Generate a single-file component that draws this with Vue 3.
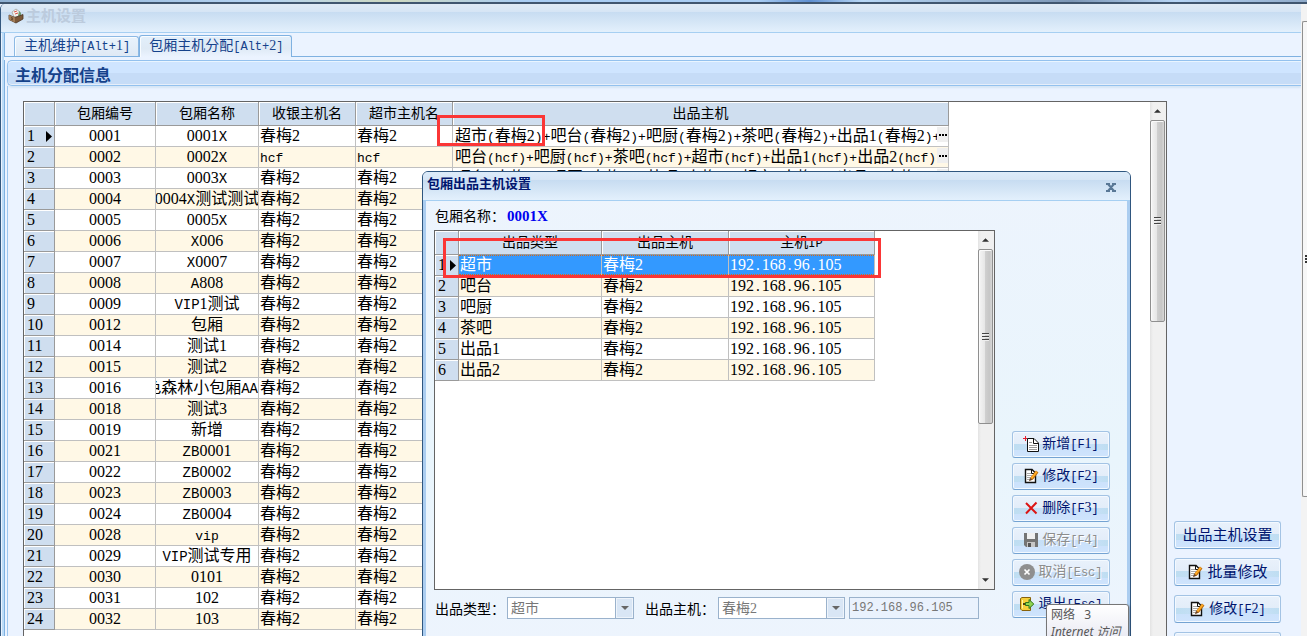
<script setup>
import { h, ref } from 'vue'

// Splits text into digit/han runs and half-width latin runs.
const Mixed = (props) =>
  props.text
    .split(/([A-Z]+|[^\dA-Z\u2e80-\uffff]+)/)
    .filter((part) => part)
    .map((part) => {
      if (/^[A-Z]/.test(part)) return h('span', { class: 'caps' }, part)
      if (/^[\d\u2e80-\uffff]/.test(part)) return part
      return h('span', { class: 'half' }, part)
    })
Mixed.props = ['text']

const columns = ['包厢编号', '包厢名称', '收银主机名', '超市主机名', '出品主机']
const firstOutput = '超市(春梅2)+吧台(春梅2)+吧厨(春梅2)+茶吧(春梅2)+出品1(春梅2)+出品2(春梅2)'
const hcfOutput = '吧台(hcf)+吧厨(hcf)+茶吧(hcf)+超市(hcf)+出品1(hcf)+出品2(hcf)'
const defaultOutput = '吧台(春梅2)+吧厨(春梅2)+茶吧(春梅2)+超市(春梅2)+出品1(春梅2)+出品2(春梅2)'
const rooms = [
  ['0001', '0001X'], ['0002', '0002X'], ['0003', '0003X'], ['0004', '0004X测试测试'],
  ['0005', '0005X'], ['0006', 'X006'], ['0007', 'X0007'], ['0008', 'A808'],
  ['0009', 'VIP1测试'], ['0012', '包厢'], ['0014', '测试1'], ['0015', '测试2'],
  ['0016', '色森林小包厢AA'], ['0018', '测试3'], ['0019', '新增'], ['0021', 'ZB0001'],
  ['0022', 'ZB0002'], ['0023', 'ZB0003'], ['0024', 'ZB0004'], ['0028', 'vip'],
  ['0029', 'VIP测试专用'], ['0030', '0101'], ['0031', '102'], ['0032', '103'],
].map(([id, name], i) => {
  const host = i === 1 ? 'hcf' : '春梅2'
  return { id, name, host, output: [firstOutput, hcfOutput][i] || defaultOutput }
})

const outputColumns = ['出品类型', '出品主机', '主机IP']
const outputs = ['超市', '吧台', '吧厨', '茶吧', '出品1', '出品2']
const ip = ref('192.168.96.105')

const actions = [
  { icon: 'new', text: '新增[F1]' },
  { icon: 'edit', text: '修改[F2]' },
  { icon: 'delete', text: '删除[F3]' },
  { icon: 'save', text: '保存[F4]', disabled: true },
  { icon: 'cancel', text: '取消[Esc]', disabled: true },
  { icon: 'exit', text: '退出[Esc]' },
]
const sideActions = [
  { text: '出品主机设置', large: true },
  { icon: 'edit', text: '批量修改', large: true },
  { icon: 'edit', text: '修改[F2]' },
  { icon: 'save', text: '保存[F4]' },
]

const iconShapes = {
  new: [
    { d: 'M4.5 2.5H11L15.5 7V15.5H4.5Z', fill: '#fff', stroke: '#111' },
    { d: 'M10.5 3V7.5H15', stroke: '#111' },
    { d: 'M6 6.5H9M6 9.5H14M6 11.5H14M6 13.5H14', stroke: '#9a9a9a' },
    { d: 'M0 2.5H4M2.5 0V5', stroke: '#e81c2c' },
  ],
  edit: [
    { d: 'M2.5 1.5H9L12.5 5V14.5H2.5Z', fill: '#fff', stroke: '#111', w: 1.4 },
    { d: 'M8.5 2V5.5H12', stroke: '#111' },
    { d: 'M4 5.5H8M4 7.5H9M4 9.5H8M4 11.5H7', stroke: '#a8a8a8' },
    { d: 'M14.2 3.6L8.4 11', stroke: '#b8690c', w: 3.2 },
    { d: 'M13.8 3.6L8.4 10.4', stroke: '#ffab26', w: 1.8 },
    { d: 'M6 13.2L7 9.8L9.5 11.8Z', fill: '#6b4220' },
  ],
  delete: [
    { d: 'M3 3L13.5 13.5M13.5 2.5L3 13.5', stroke: '#dc1414', w: 2 },
  ],
  save: [
    { d: 'M1 1H15V15H3L1 13Z', fill: '#747474' },
    { d: 'M4 1H12V7H4Z', fill: '#f0f0f0' },
    { d: 'M4 10H12V15H4Z', fill: '#c6c6c6' },
    { d: 'M5 11H8V15H5Z', fill: '#555' },
  ],
  cancel: [
    { d: 'M8 0A8 8 0 1 1 8 16A8 8 0 1 1 8 0', fill: '#8f8f8f' },
    { d: 'M5.5 5.5L10.5 10.5M10.5 5.5L5.5 10.5', stroke: '#fff', w: 1.7 },
  ],
  exit: [
    { d: 'M1.5 2.5L3 1.5H11.5V14.5H3L1.5 13Z', fill: '#f5cf3b', stroke: '#87620b' },
    { d: 'M3.5 4V12.5', stroke: '#fff2a4' },
    { d: 'M4 7H6V9H4Z', fill: '#51400c' },
    { d: 'M6.5 6.5H10V3.5L14.8 8L10 12.5V9.5H6.5Z', fill: '#8fd44f', stroke: '#2e741c' },
  ],
}
const Icon = (props) =>
  h('svg', { class: 'icon', viewBox: '0 0 16 16', 'aria-hidden': 'true' },
    iconShapes[props.name].map((s) =>
      h('path', { d: s.d, fill: s.fill || 'none', stroke: s.stroke || 'none', 'stroke-width': s.w || 1 })))
Icon.props = ['name']
</script>

<template>
  <div class="screen">
    <div class="strip"></div>
    <div class="desk">
      <main class="window">
        <header class="titlebar">
          <svg class="app-icon" viewBox="0 0 16 16" aria-hidden="true">
            <path d="M4 4L8 1L12 4L12 8L6 9Z" fill="#f2f2ee" stroke="#9c9c94" stroke-width=".7" />
            <path d="M6 4L9 3M7 6L10 5" stroke="#d9534a" />
            <path d="M11 3L13 5V8L10 8Z" fill="#6f9a72" />
            <path d="M1 7L7 9.5L15 6.5V11L8 15L1 11.5Z" fill="#7b5838" stroke="#4b3524" stroke-width=".8" />
            <path d="M1 7L7 9.5V14.5L1 11.5Z" fill="#a27c56" />
            <path d="M3 9.5L5 10.5M3 11L5 12" stroke="#5a4029" />
          </svg>
          <h1>主机设置</h1>
        </header>

        <div class="body">
          <nav class="tabs">
            <button class="tab"><Mixed text="主机维护[Alt+1]" /></button>
            <button class="tab active"><Mixed text="包厢主机分配[Alt+2]" /></button>
          </nav>

          <section class="panel">
            <h2>主机分配信息</h2>
            <div class="content">
              <div class="grid">
                <div class="sheet">
                  <table class="rooms">
                    <colgroup>
                      <col class="c-no"><col class="c-id"><col class="c-name"><col class="c-host"><col class="c-host"><col class="c-out">
                    </colgroup>
                    <thead>
                      <tr>
                        <th></th>
                        <th v-for="c in columns" :key="c">{{ c }}</th>
                      </tr>
                    </thead>
                    <tbody>
                      <tr v-for="(r, i) in rooms" :key="r.id">
                        <th scope="row">
                          <div class="cell no">
                            {{ i + 1 }}
                            <svg v-if="i === 0" class="pointer" viewBox="0 0 6 11" aria-hidden="true"><path d="M0 0L6 5.5L0 11Z" /></svg>
                          </div>
                        </th>
                        <td><div class="cell center"><span><Mixed :text="r.id" /></span></div></td>
                        <td><div class="cell center" :class="{ tail: r.id === '0016' }"><span><Mixed :text="r.name" /></span></div></td>
                        <td><div class="cell"><Mixed :text="r.host" /></div></td>
                        <td><div class="cell"><Mixed :text="r.host" /></div></td>
                        <td>
                          <div class="cell out">
                            <span class="clip"><Mixed :text="r.output" /></span>
                            <button class="more" aria-label="more"><i></i><i></i><i></i></button>
                          </div>
                        </td>
                      </tr>
                    </tbody>
                  </table>
                </div>
                <div class="scroll">
                  <svg viewBox="0 0 8 4" aria-hidden="true"><path d="M0 4L4 0L8 4Z" /></svg>
                  <div class="thumb long"><i></i><i></i><i></i></div>
                </div>
              </div>

              <aside class="side">
                <button v-for="a in sideActions" :key="a.text" class="btn" :class="{ large: a.large }">
                  <Icon v-if="a.icon" :name="a.icon" /><span><Mixed :text="a.text" /></span>
                </button>
              </aside>
            </div>
          </section>
        </div>
      </main>
      <div class="outer-scroll"><div class="outer-thumb"><i></i><i></i><i></i></div></div>
    </div>

    <div class="mark mark-cell"></div>

    <section class="dialog" role="dialog" aria-label="包厢出品主机设置">
      <header class="dialog-title">
        <h3>包厢出品主机设置</h3>
        <button class="close" aria-label="close">
          <svg viewBox="0 0 10 9" aria-hidden="true"><path d="M0 1H4M6 1H10M0 8H4M6 8H10M2 1L8 8M8 1L2 8" /></svg>
        </button>
      </header>
      <div class="dialog-body">
        <div class="dialog-main">
          <p class="room">包厢名称：<b>0001X</b></p>
          <div class="grid inner">
            <div class="sheet">
              <table class="outputs">
                <colgroup><col class="o-no"><col class="o-type"><col class="o-host"><col class="o-ip"></colgroup>
                <thead>
                  <tr>
                    <th></th>
                    <th v-for="c in outputColumns" :key="c"><Mixed :text="c" /></th>
                  </tr>
                </thead>
                <tbody>
                  <tr v-for="(o, i) in outputs" :key="o" :class="{ selected: i === 0 }">
                    <th scope="row">
                      <div class="cell no">
                        {{ i + 1 }}
                        <svg v-if="i === 0" class="pointer" viewBox="0 0 6 11" aria-hidden="true"><path d="M0 0L6 5.5L0 11Z" /></svg>
                      </div>
                    </th>
                    <td><div class="cell">{{ o }}</div></td>
                    <td><div class="cell">春梅2</div></td>
                    <td><div class="cell"><Mixed text="192.168.96.105" /></div></td>
                  </tr>
                </tbody>
              </table>
            </div>
            <div class="scroll">
              <svg viewBox="0 0 8 4" aria-hidden="true"><path d="M0 4L4 0L8 4Z" /></svg>
              <div class="thumb short"><i></i><i></i><i></i></div>
              <svg class="down" viewBox="0 0 8 4" aria-hidden="true"><path d="M0 0L4 4L8 0Z" /></svg>
            </div>
          </div>
          <form class="fields">
            <label for="type">出品类型：</label>
            <span class="combo">
              <select id="type" disabled><option>超市</option></select>
              <span class="drop"><svg viewBox="0 0 8 4" aria-hidden="true"><path d="M0 0L4 4L8 0Z" /></svg></span>
            </span>
            <label for="host" class="second">出品主机：</label>
            <span class="combo">
              <select id="host" disabled><option>春梅2</option></select>
              <span class="drop"><svg viewBox="0 0 8 4" aria-hidden="true"><path d="M0 0L4 4L8 0Z" /></svg></span>
            </span>
            <input v-model="ip" class="ip" type="text" disabled aria-label="主机IP">
          </form>
        </div>
        <div class="actions">
          <button v-for="a in actions" :key="a.icon" class="btn" :disabled="a.disabled">
            <Icon :name="a.icon" /><span><Mixed :text="a.text" /></span>
          </button>
        </div>
      </div>
    </section>

    <div class="mark mark-row"></div>
    <div class="tip" role="tooltip"><div>网络&nbsp;&nbsp; 3</div><em>Internet 访问</em></div>
  </div>
</template>

<style>
html, body { margin: 0; background: #ebf3ff; }
.half { font-family: "Liberation Mono", monospace; font-size: 13px; line-height: 1; }
.caps { font-family: "Liberation Mono", monospace; font-size: 14px; line-height: 1; }
.tab .half, .tab .caps, .btn .half, .btn .caps, thead .caps { font-size: 12px; }
.icon { width: 16px; height: 16px; flex: none; overflow: visible; }
</style>

<style scoped>
.screen {
  position: relative; height: 100vh; overflow: hidden; display: flex; flex-direction: column;
  font-family: "Liberation Serif", "Noto Sans CJK SC", serif; font-size: 14px; color: #000;
}
h1, h2, h3, p { margin: 0; }
button { font-family: inherit; cursor: default; }
.strip { height: 2px; flex: none; border-bottom: 2px solid #40566f; background: linear-gradient(90deg, #8fb0d2, #b5d4f3 20%, #cfd9c0 30%, #a9cdf3 40%, #a9cdf3 58%, #5f8fd0 62%, #b9d8f6 66%, #7c96b5 82%, #b7d5f5 90%, #8faac9); }
.desk { flex: 1; min-height: 0; display: flex; }
.window { flex: 1; min-width: 0; display: flex; flex-direction: column; border-left: 1px solid #34587f; border-radius: 5px 0 0 0; background: #ebf3ff; }
.titlebar {
  height: 28px; flex: none; display: flex; align-items: center; gap: 2px; padding-left: 7px;
  border-bottom: 1px solid #a6cff2; border-radius: 5px 0 0 0;
  background: linear-gradient(#dfeaf5 0, #d6e5f5 8px, #c7dcf1 8px, #e3f0fc 100%);
}
.titlebar h1 { font-size: 15px; line-height: 22px; color: #bccbdd; padding-bottom: 5px; }
.app-icon { width: 16px; height: 16px; margin-bottom: 4px; }
.body { flex: 1; min-height: 0; display: flex; flex-direction: column; margin-left: 1px; border-left: 2px solid #bcdcf8; }
.tabs { display: flex; align-items: flex-end; height: 23px; flex: none; padding-left: 9px; border-bottom: 1px solid #7fb1e1; border-left: 1px solid #7fb1e1; }
.tab {
  height: 20px; padding: 0 8px 2px 9px; border: 1px solid #8db9e4; border-bottom: 0; border-radius: 3px 3px 0 0;
  background: linear-gradient(#e9f3fd, #dfe9f4); box-shadow: inset 1px 1px #f8fcff; color: #15428b; font-size: 14px; line-height: 18px; white-space: nowrap;
}
.tab.active { height: 22px; margin-bottom: -1px; background: linear-gradient(#e2effb, #dfeaf5 60%, #ebf3ff); border-color: #7fb1e1; }
.panel {
  flex: 1; min-height: 0; display: flex; flex-direction: column; margin-top: 3px; padding-left: 2px;
  border-left: 1px solid #7fb1e1;
}
.panel h2 {
  height: 24px; flex: none; padding-left: 7px; border: 1px solid #93c1ee; border-right: 0; border-radius: 5px 0 0 5px;
  background: linear-gradient(#cfe5ff 0, #cfe5ff 12px, #c6dcf7 12px); box-shadow: inset 0 1px #e9f5ff, inset 0 -1px #e6eefa, 0 2px 2px #d6e5f6;
  color: #15428b; font-size: 16px; line-height: 30px;
}
.content { flex: 1; min-height: 0; display: flex; padding: 15px 0 0 15px; border-left: 1px solid #9cc6ef; }
.grid { flex: 1; min-width: 0; display: flex; background: #fff; border: 1px solid #646464; border-bottom: 0; }
.sheet { flex: 1; min-width: 0; overflow: hidden; }
table { border-collapse: separate; border-spacing: 0; table-layout: fixed; width: 0; font-size: 16px; }
.c-no { width: 31px; } .c-id { width: 101px; } .c-name { width: 103px; } .c-host { width: 97px; } .c-out { width: 496px; }
.o-no { width: 24px; } .o-type { width: 143px; } .o-host { width: 127px; } .o-ip { width: 146px; }
th, td { padding: 0; border-right: 1px solid #c0c0c0; border-bottom: 1px solid #c0c0c0; font-weight: normal; }
th { background: #cfdeef; border-color: #9a9a9a; box-shadow: inset 1px 1px #fff; }
thead th { height: 23px; font-size: 14px; line-height: 22px; white-space: nowrap; overflow: hidden; }
tbody tr:nth-child(even) td { background: #fff8e6; }
.cell { height: 20px; line-height: 20px; padding: 0 2px 0 1px; overflow: hidden; white-space: nowrap; }
.cell.no { display: flex; align-items: center; justify-content: space-between; padding: 0 2px 0 3px; text-align: left; }
.cell.center { display: flex; justify-content: center; padding: 0; }
.cell.center.tail { justify-content: flex-end; }
.cell.out { display: flex; padding: 0 0 0 2px; }
.clip { flex: 1; min-width: 0; overflow: hidden; }
.pointer { width: 6px; height: 11px; }
.more { flex: none; width: 11px; height: 15px; margin-top: 1px; padding: 0; border: 0; background: #efefef; display: flex; gap: 1px; align-items: center; justify-content: center; }
.more i { width: 2px; height: 2px; background: #000; }
.selected td { background: #3399ff; color: #fff; }
.selected .cell { height: 18px; line-height: 18px; border-top: 1px dotted #d2691e; border-bottom: 1px dotted #d2691e; }
.selected .cell.no { border-color: transparent; }

.scroll { width: 15px; flex: none; padding-right: 1px; display: flex; flex-direction: column; align-items: stretch; background: linear-gradient(90deg, #e3e3e3, #f0f0f0 3px); }
.scroll svg { width: 7px; height: 4px; margin: 7px auto; flex: none; fill: #333; }
.scroll .down { margin: auto auto 7px; }
.thumb {
  border: 1px solid #8f8f8f; border-radius: 2px; box-shadow: inset 1px 1px #fafafa; background: linear-gradient(90deg, #f5f5f5, #e6e6e6 45%, #cfcfcf 50%, #c6c6c6 80%, #d8d8d8);
  display: flex; flex-direction: column; gap: 1px; align-items: center; justify-content: center;
}
.thumb i { width: 7px; height: 1px; border-bottom: 1px solid #eee; background: #444; }
.thumb.long { height: 200px; }
.thumb.short { height: 173px; }
.outer-scroll { width: 6px; flex: none; padding: 17px 0 0 1px; background: #f3f3f3; overflow: hidden; box-sizing: border-box; }
.outer-thumb { height: 474px; border: 1px solid #8f8f8f; border-right: 0; border-radius: 2px 0 0 2px; background: #f7f7f7; display: flex; flex-direction: column; gap: 1px; align-items: flex-end; justify-content: center; }
.outer-thumb i { width: 2px; height: 2px; background: #333; }

.side { width: 134px; flex: none; box-sizing: border-box; padding: 0 20px 0 7px; margin-bottom: -24px; display: flex; flex-direction: column; justify-content: flex-end; gap: 9px; }
.btn {
  height: 27px; flex: none; padding: 0 0 1px; display: flex; align-items: center; justify-content: center; gap: 3px; border: 1px solid #a3c3e4;
  border-bottom-color: #74a3d2; border-radius: 3px; box-shadow: inset 0 0 0 1px #f3f9ff;
  background: linear-gradient(90deg, #b8dcecaa, #b8dcec00 40%, #b8dcec00 75%, #b8dcecaa) 0 12px / 100% 6px no-repeat, linear-gradient(#e9f1fb 0, #e3edf9 12px, #c9e0fa 12px, #cfe4fd 100%);
  color: #00156e; font-size: 14px; line-height: 20px; white-space: nowrap;
}
.side .btn { height: 28px; gap: 4px; }
.btn.large { font-size: 15px; }
.btn:disabled { color: #8d8d8d; text-shadow: 1px 1px #fff; }

.mark { position: absolute; box-sizing: border-box; border: 3px solid #fb3636; pointer-events: none; }
.mark-cell { left: 437px; top: 115px; width: 108px; height: 31px; }
.mark-row { left: 443px; top: 238px; width: 438px; height: 40px; }

.dialog {
  position: absolute; left: 422px; top: 171px; bottom: -10px; width: 709px; box-sizing: border-box; display: flex; flex-direction: column;
  border: 1px solid #2f567f; border-radius: 6px 6px 0 0; background: linear-gradient(#edf4fd, #e9f5fc 60%, #edf4fd); overflow: hidden;
}
.dialog-title {
  height: 28px; flex: none; display: flex; align-items: flex-start; justify-content: space-between; padding: 0 13px 0 4px;
  border-bottom: 1px solid #a6cff2; background: linear-gradient(#dcebfa 0, #d6e5f5 8px, #c7dcf1 8px, #e3f0fc 100%);
}
.dialog-title h3 { font-size: 13px; line-height: 24px; color: #00156e; }
.close { padding: 0; margin-top: 11px; width: 11px; height: 10px; border: 0; background: none; display: flex; }
.close svg { width: 10px; height: 9px; fill: none; stroke: #597896; stroke-width: 2; }
.dialog-body { flex: 1; min-height: 0; display: flex; justify-content: space-between; padding: 0 17px 26px 8px; border: solid #abcdf0; border-width: 0 3px; }
.dialog-main { width: 561px; display: flex; flex-direction: column; }
.room { height: 29px; line-height: 30px; padding-left: 1px; font-size: 14px; white-space: nowrap; }
.room b { margin-left: 2px; color: #0000f0; font-size: 15px; }
.grid.inner { border-bottom: 1px solid #646464; min-height: 0; }
.fields { display: flex; align-items: center; height: 22px; margin-top: 7px; flex: none; }
.fields label { width: 73px; padding-left: 1px; box-sizing: border-box; white-space: nowrap; }
.fields label.second { width: 84px; padding-left: 11px; }
.combo { display: grid; grid-template-columns: 1fr 18px; width: 127px; height: 22px; flex: none; box-sizing: border-box; border: 1px solid #9ab2cc; background: #fff; }
.combo select { appearance: none; min-width: 0; border: 0; padding: 0 3px; margin: 0; background: #fff; color: #777; opacity: 1; font-family: inherit; font-size: 14px; }
.drop { display: flex; align-items: center; justify-content: center; background: #d9e6f5; border-left: 1px solid #9ab2cc; box-shadow: inset 0 0 0 1px #eef4fb; }
.drop svg { width: 8px; height: 4px; fill: #666; }
.ip { width: 130px; height: 22px; margin-left: 4px; box-sizing: border-box; padding: 0 2px 1px; border: 1px solid #9ab2cc; background: #eaf2fd; color: #777; font-family: "Liberation Mono", monospace; font-size: 12px; }
.actions { width: 98px; display: flex; flex-direction: column; justify-content: flex-end; gap: 5px; margin-bottom: 1px; }

.tip {
  position: absolute; left: 1046px; top: 604px; width: 83px; height: 44px; box-sizing: border-box; padding: 1px 4px; border: 1px solid #767676; border-radius: 3px;
  background: linear-gradient(#fff, #e4e5f0); box-shadow: 1px 1px 2px #0004; color: #575757; font-family: "Noto Sans", "Noto Sans CJK SC", sans-serif; font-size: 12px; line-height: 17px; white-space: nowrap;
}
</style>
